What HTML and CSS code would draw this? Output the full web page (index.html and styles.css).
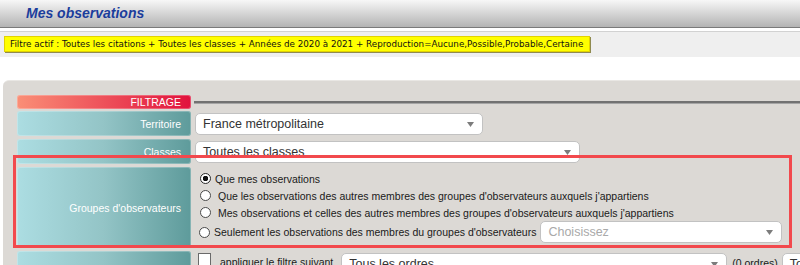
FILE: index.html
```html
<!DOCTYPE html>
<html lang="fr">
<head>
  <meta charset="UTF-8">
  <title>Mes observations</title>
  <link rel="stylesheet" href="styles.css">
</head>
<body>
<div class="topbar">
  <h1 class="title">Mes observations</h1>
</div>

<div class="filterzone">
  <div class="activefilter">Filtre actif : Toutes les citations + Toutes les classes + Années de 2020 à 2021 + Reproduction=Aucune,Possible,Probable,Certaine</div>
</div>

<div class="panel">
  <div class="row row-head">
    <div class="label label-head">FILTRAGE</div>
    <div class="rule"></div>
  </div>

  <div class="row row-select">
    <div class="label">Territoire</div>
    <div class="field">
      <div class="select sel-territoire"><span>France métropolitaine</span><svg class="arrow" width="7" height="5" viewBox="0 0 7 5"><path d="M0 0H7L3.5 5Z"/></svg></div>
    </div>
  </div>

  <div class="row row-select">
    <div class="label">Classes</div>
    <div class="field">
      <div class="select sel-classes"><span>Toutes les classes</span><svg class="arrow" width="7" height="5" viewBox="0 0 7 5"><path d="M0 0H7L3.5 5Z"/></svg></div>
    </div>
  </div>

  <div class="row row-groups">
    <div class="label">Groupes d'observateurs</div>
    <div class="field options">
      <label class="option"><span class="radio checked"></span>Que mes observations</label>
      <label class="option option-wide"><span class="radio"></span>Que les observations des autres membres des groupes d'observateurs auxquels j'appartiens</label>
      <label class="option option-wide"><span class="radio"></span>Mes observations et celles des autres membres des groupes d'observateurs auxquels j'appartiens</label>
      <label class="option option-last"><span class="radio"></span>Seulement les observations des membres du groupes d'observateurs
        <span class="select sel-groupe placeholder"><span>Choisissez</span><svg class="arrow" width="7" height="5" viewBox="0 0 7 5"><path d="M0 0H7L3.5 5Z"/></svg></span>
      </label>
    </div>
  </div>

  <div class="row row-orders">
    <div class="label"></div>
    <div class="field field-inline">
      <span class="checkbox"></span>
      <span class="check-text">appliquer le filtre suivant</span>
      <div class="select sel-ordres"><span>Tous les ordres</span><svg class="arrow" width="7" height="5" viewBox="0 0 7 5"><path d="M0 0H7L3.5 5Z"/></svg></div>
      <span class="count">(0 ordres)</span>
      <div class="select sel-more"><span>Tous</span></div>
    </div>
  </div>
</div>

<div class="highlight"></div>
</body>
</html>
```

FILE: styles.css
```css
body {
  margin: 0;
  background: #fff;
  font-family: "Liberation Sans", Arial, sans-serif;
  width: 800px;
  height: 265px;
  overflow: hidden;
  position: relative;
}

.topbar {
  height: 27px;
  background: linear-gradient(#f7f7f7, #b3b3b3);
  border-bottom: 1px solid #7a7a7a;
}

.title {
  margin: 0;
  padding-left: 26px;
  font-size: 14px;
  line-height: 27px;
  font-style: italic;
  font-weight: bold;
  color: #1b3d9c;
}

.filterzone {
  display: flex;
  align-items: flex-start;
  margin-top: 3px;
  border-top: 1px solid #d2d2d2;
  background: #efefef;
  padding: 4px 0 5px 4px;
}

.activefilter {
  background: #ffff00;
  border: 1px solid #e2d200;
  box-shadow: 1px 1px 0 #8f8a50;
  font-family: "DejaVu Sans", Verdana, sans-serif;
  font-size: 8.75px;
  line-height: 14px;
  padding: 0 6px 0 5px;
  color: #111;
  white-space: nowrap;
}

.panel {
  margin: 23px 0 0 3px;
  padding: 14px 0 0 14px;
  background: #dcd9d5;
  border-top: 1px solid #e9e7e4;
  border-radius: 6px 0 0 0;
  height: 200px;
}

.row {
  display: flex;
  gap: 4px;
  margin-bottom: 3px;
}

.label {
  flex: none;
  width: 174px;
  box-sizing: border-box;
  padding-right: 10px;
  border-radius: 3px;
  background: linear-gradient(to right, #acdde2, #93c4c6 50%, #5e9b9b);
  box-shadow: inset 0 0 0 1px rgba(255, 255, 255, 0.25);
  color: #fff;
  font-size: 10.5px;
  text-align: right;
  display: flex;
  align-items: center;
  justify-content: flex-end;
}

.row-head {
  height: 14px;
  margin-bottom: 2px;
  align-items: center;
}

.label-head {
  height: 14px;
  background: linear-gradient(to right, #fa8f77, #e1123d);
}

.rule {
  flex: 1;
  height: 2px;
  background: #727272;
  border-bottom: 1px solid #a5a5a5;
  margin-left: -1px;
}

.row-select {
  height: 25px;
}

.field {
  flex: 1;
  padding-top: 2px;
}

.select {
  flex: none;
  box-sizing: border-box;
  height: 22px;
  background: #fff;
  border: 1px solid #c2c2c2;
  border-radius: 5px;
  display: flex;
  align-items: center;
  justify-content: space-between;
  padding: 0 8px 0 7px;
  font-size: 12.5px;
  color: #333;
  white-space: nowrap;
}

.arrow {
  fill: #7c7c7c;
}

.sel-territoire { width: 288px; }
.sel-classes { width: 385px; }
.sel-groupe { width: 242px; margin-left: 4px; }
.sel-ordres { width: 386px; margin-left: 8px; }
.sel-more { width: 60px; margin-left: 4px; }

.placeholder {
  color: #a9a9a9;
}

.row-groups {
  height: 81px;
}

.options {
  padding-top: 3px;
  font-size: 10.5px;
  color: #1a1a1a;
}

.option {
  display: flex;
  align-items: center;
  height: 17px;
  white-space: nowrap;
}

.option-last {
  height: 22px;
}

.radio {
  flex: none;
  width: 11px;
  height: 11px;
  box-sizing: border-box;
  border: 1px solid #4a4a4a;
  border-radius: 50%;
  background: #fff;
  margin: 0 4px 0 5px;
}

.option-wide .radio {
  margin-right: 7px;
}

.option-last .radio {
  margin-left: 4px;
}

.radio.checked {
  border-color: #2a2a2a;
  background: radial-gradient(circle, #111 0, #111 2.5px, #fff 3px);
}

.row-orders {
  height: 60px;
}

.field-inline {
  display: flex;
  align-items: flex-start;
  font-size: 10.5px;
  color: #1a1a1a;
  white-space: nowrap;
}

.checkbox {
  flex: none;
  width: 13px;
  height: 13px;
  box-sizing: border-box;
  border: 1px solid #6a6a6a;
  background: #fff;
  margin: 0 9px 0 3px;
}

.check-text {
  flex: none;
  line-height: 22px;
  margin-top: -2px;
}

.count {
  flex: none;
  line-height: 20px;
  margin-left: 5px;
}

.highlight {
  position: absolute;
  left: 13px;
  top: 155px;
  width: 779px;
  height: 93px;
  box-sizing: border-box;
  border: 3px solid #f2494d;
}
```
